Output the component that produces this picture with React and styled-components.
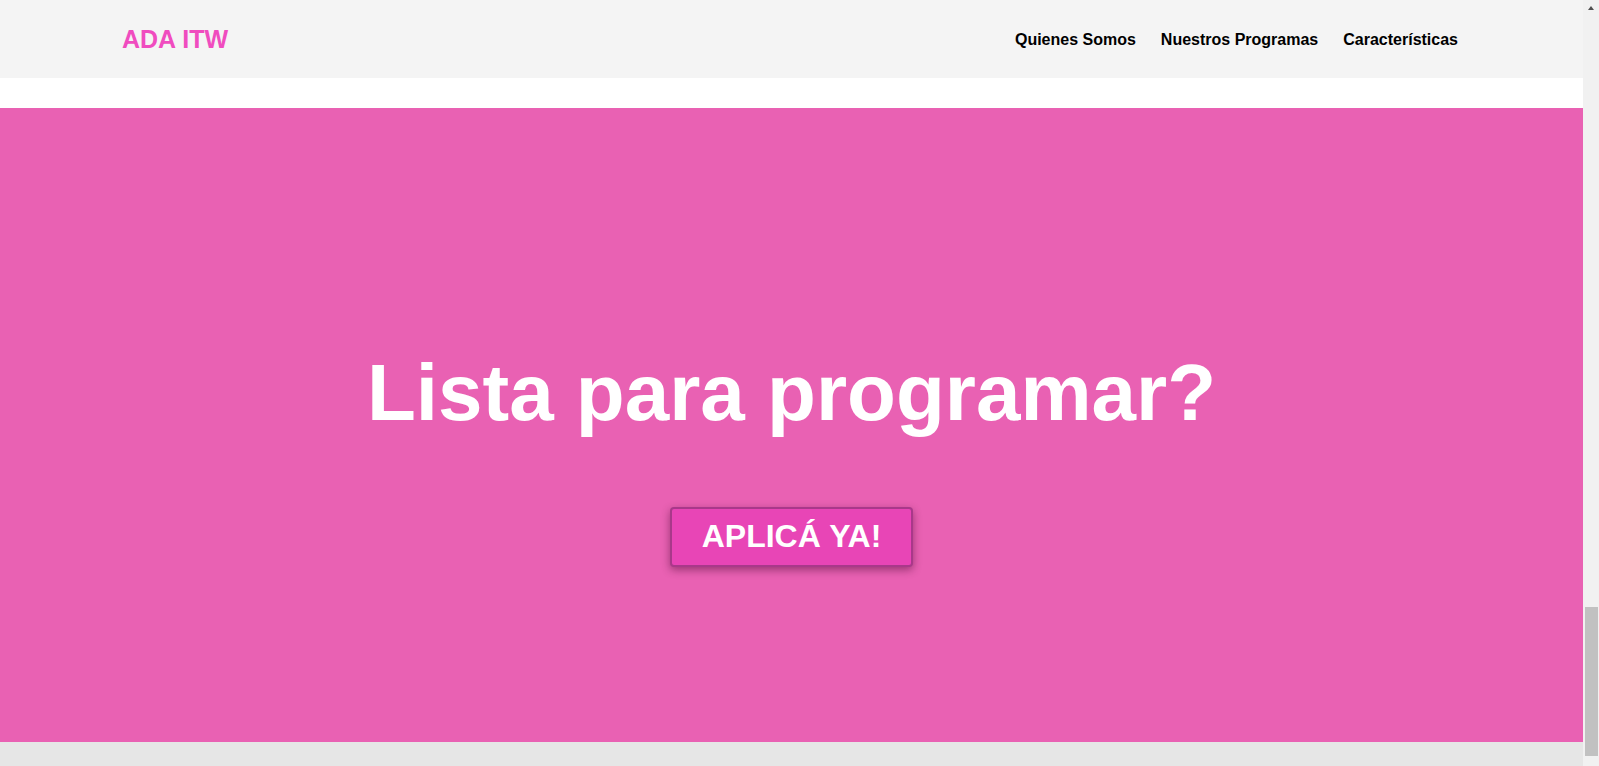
import React, { useLayoutEffect, useRef } from "react";
import styled, { createGlobalStyle } from "styled-components";

const GlobalStyle = createGlobalStyle`
  html, body {
    margin: 0;
    height: 100%;
    overflow: hidden;
  }
  body {
    font-family: "Liberation Sans", Arial, sans-serif;
  }
  * {
    box-sizing: border-box;
  }
`;

const App = () => {
  const pageRef = useRef(null);

  // the screenshot shows the page scrolled down to the call to action
  useLayoutEffect(() => {
    const el = pageRef.current;
    if (el) el.scrollTop = el.scrollHeight;
  }, []);

  return (
    <>
      <GlobalStyle />
      <Window>
        <Page ref={pageRef}>
          <Header>
            <LogoText>ADA ITW</LogoText>
            <HeaderMenu>
              <HeaderLink href="#quienes">Quienes Somos</HeaderLink>
              <HeaderLink href="#programas">Nuestros Programas</HeaderLink>
              <HeaderLink href="#caracteristicas">Características</HeaderLink>
            </HeaderMenu>
          </Header>
          <ContentSection />
          <Hero>
            <HeroTitle>Lista para programar?</HeroTitle>
            <ApplyButton type="button">APLICÁ YA!</ApplyButton>
          </Hero>
          <Footer />
        </Page>
        <ScrollBar>
          <ScrollArrow />
          <ScrollTrack>
            <ScrollThumb />
          </ScrollTrack>
        </ScrollBar>
      </Window>
    </>
  );
};

const Window = styled.div`
  height: 100vh;
  display: flex;
  flex-direction: row;
`;

const Page = styled.div`
  flex: 1;
  height: 100%;
  overflow-y: scroll;
  scrollbar-width: none;
  background: #ffffff;

  &::-webkit-scrollbar {
    display: none;
  }
`;

const ScrollBar = styled.div`
  width: 16px;
  height: 100%;
  display: flex;
  flex-direction: column;
  padding-bottom: 10px;
  background-color: #f1f1f1;
`;

const ScrollArrow = styled.div`
  height: 17px;
  display: flex;
  justify-content: center;
  padding-top: 6px;

  &::before {
    content: "";
    width: 0;
    height: 0;
    border-left: 3.5px solid transparent;
    border-right: 3.5px solid transparent;
    border-bottom: 4px solid #505050;
  }
`;

const ScrollTrack = styled.div`
  flex: 1;
  display: flex;
  flex-direction: column;
  justify-content: flex-end;
  padding: 0 1px 0 2px;
`;

const ScrollThumb = styled.div`
  height: 149px;
  background-color: #c1c1c1;
`;

const Header = styled.header`
  position: sticky;
  top: 0;
  z-index: 10;
  height: 78px;
  display: flex;
  flex-direction: row;
  align-items: center;
  padding: 0 125px 0 122px;
  background-color: #f4f4f4;
`;

const LogoText = styled.div`
  margin-right: auto;
  font-size: 25px;
  font-weight: bold;
  line-height: 1;
  color: #f04cbf;
`;

const HeaderMenu = styled.nav`
  display: flex;
  flex-direction: row;
  align-items: center;
  gap: 25px;
  padding-top: 1px;
`;

const HeaderLink = styled.a`
  font-size: 16px;
  font-weight: bold;
  color: #000000;
  text-decoration: none;
`;

const ContentSection = styled.section`
  height: 3064px;
  background: #ffffff;
`;

const Hero = styled.section`
  height: 634px;
  display: flex;
  flex-direction: column;
  align-items: center;
  padding-top: 239px;
  background-color: #e961b3;
`;

const HeroTitle = styled.h1`
  margin: 0;
  font-size: 80px;
  font-weight: bold;
  line-height: 92px;
  color: #ffffff;
`;

const ApplyButton = styled.button`
  margin-top: 68px;
  padding: 9px 30px 11px;
  border: 2px solid #a9388a;
  border-radius: 4px;
  background-color: #e845b6;
  box-shadow: 0 3px 8px rgba(60, 0, 40, 0.45);
  font-family: "Liberation Sans", Arial, sans-serif;
  font-size: 32px;
  font-weight: bold;
  line-height: 36px;
  color: #ffffff;
  cursor: pointer;
`;

const Footer = styled.footer`
  height: 24px;
  background-color: #e6e6e6;
`;

export default App;
